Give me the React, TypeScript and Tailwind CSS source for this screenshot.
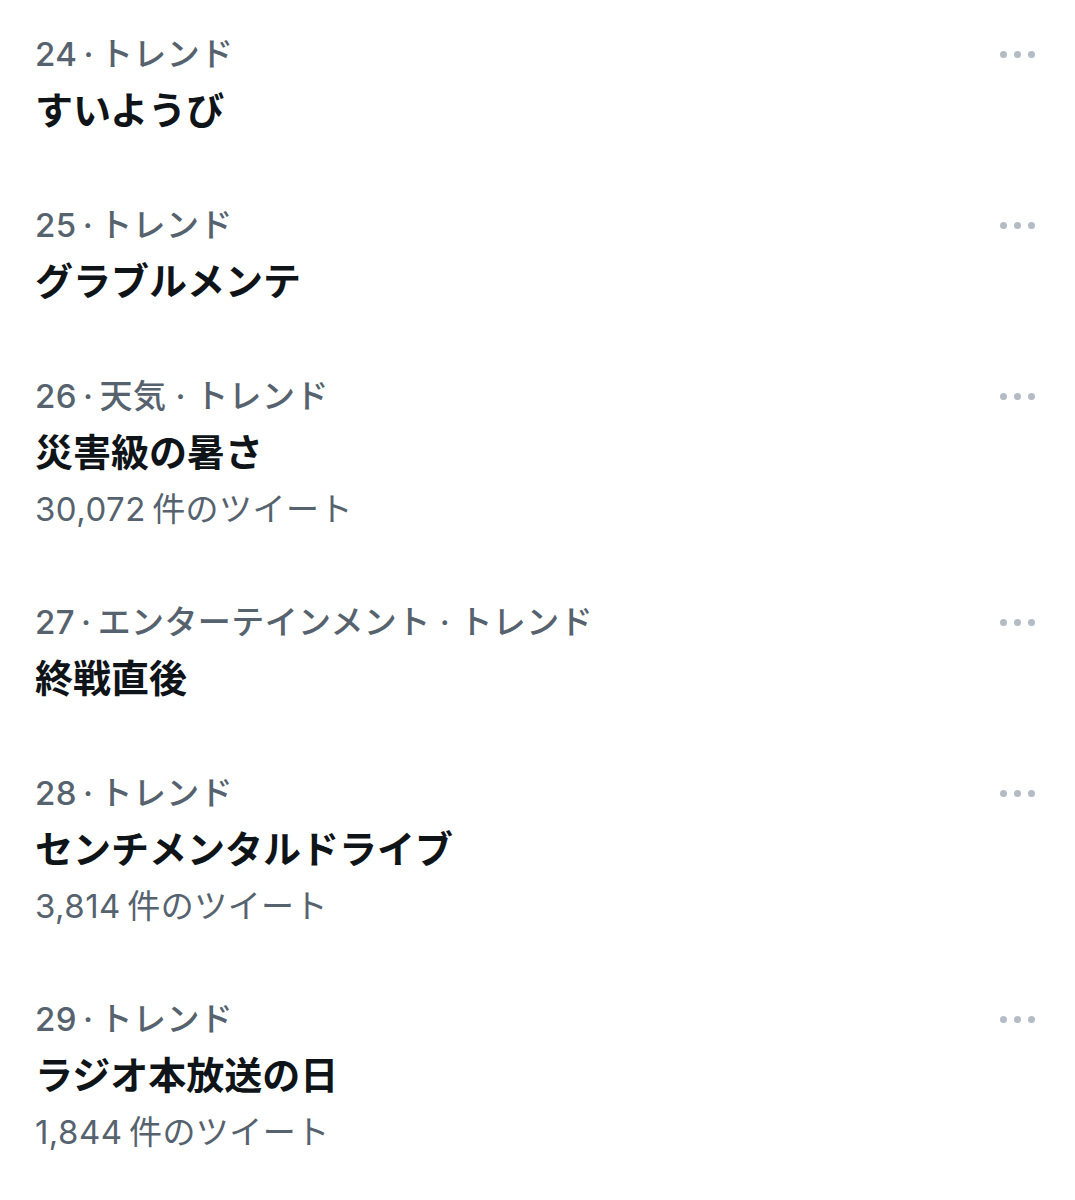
import React from 'react';

interface Trend {
  rank: number;
  category: string;
  title: string;
  count?: string;
}

const trends: Trend[] = [
  { rank: 24, category: 'トレンド', title: 'すいようび' },
  { rank: 25, category: 'トレンド', title: 'グラブルメンテ' },
  { rank: 26, category: '天気 · トレンド', title: '災害級の暑さ', count: '30,072' },
  { rank: 27, category: 'エンターテインメント · トレンド', title: '終戦直後' },
  { rank: 28, category: 'トレンド', title: 'センチメンタルドライブ', count: '3,814' },
  { rank: 29, category: 'トレンド', title: 'ラジオ本放送の日', count: '1,844' },
];

function MoreDots() {
  return (
    <div className="flex items-center gap-[7px] h-[52px]">
      <span className="w-[7px] h-[7px] rounded-full bg-[#b3bcc4]" />
      <span className="w-[7px] h-[7px] rounded-full bg-[#b3bcc4]" />
      <span className="w-[7px] h-[7px] rounded-full bg-[#b3bcc4]" />
    </div>
  );
}

export default function App() {
  return (
    <div
      className="w-[1075px] h-[1200px] bg-white overflow-hidden"
      style={{ fontFamily: '"Inter", "Noto Sans CJK JP", sans-serif' }}
    >
      {trends.map((t) => (
        <div key={t.rank} className="flex justify-between pl-[35px] pr-[40px] pt-[28px] pb-[31px]">
          <div className="flex flex-col">
            <div className="text-[33px] leading-[52px] tracking-[0.4px] font-medium text-[#56636e]">
              {t.rank}{'\u2009·\u2009'}{t.category}
            </div>
            <div className="text-[38px] leading-[60px] font-bold text-[#0f1419]">{t.title}</div>
            {t.count && (
              <div className="text-[33px] leading-[55px] tracking-[0.45px] text-[#56636e]">
                {t.count}{'\u2009'}件のツイート
              </div>
            )}
          </div>
          <MoreDots />
        </div>
      ))}
    </div>
  );
}
